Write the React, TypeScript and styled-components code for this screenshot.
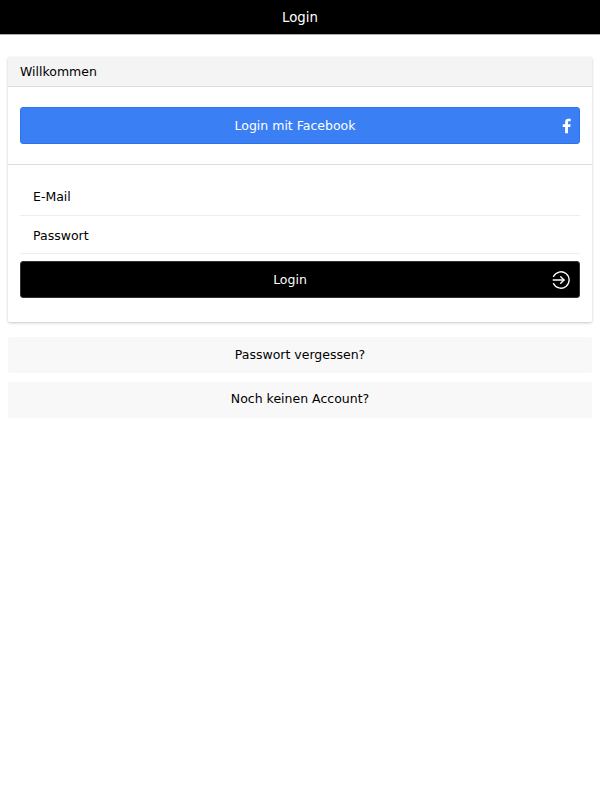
import React from "react";
import styled, { createGlobalStyle } from "styled-components";

const Global = createGlobalStyle`
  html, body { margin: 0; padding: 0; background: #fff; }
  body { font-family: "DejaVu Sans", sans-serif; font-size: 12.5px; color: #000; }
  * { box-sizing: border-box; }
`;

const TopBar = styled.header`
  height: 35px;
  background: #000;
  border-bottom: 1px solid #aaa;
  color: #fff;
  font-size: 13.3px;
  display: flex;
  align-items: center;
  justify-content: center;
`;

const Content = styled.main`
  padding: 22px 8px 0;
  display: flex;
  flex-direction: column;
`;

const Card = styled.section`
  height: 265px;
  background: #fff;
  border-radius: 2px;
  box-shadow: 0 1px 3px rgba(0, 0, 0, 0.22);
  margin-bottom: 15px;
`;

const CardHead = styled.div`
  height: 30px;
  background: #f4f4f4;
  border-bottom: 1px solid #ddd;
  padding: 0 12px;
  display: flex;
  align-items: center;
`;

const FacebookArea = styled.div`
  height: 78px;
  padding: 20px 12px 0;
  border-bottom: 1px solid #ddd;
`;

const ActionButton = styled.button<{ $bg: string; $edge: string; $offset: number }>`
  position: relative;
  width: 100%;
  height: 37px;
  display: flex;
  align-items: center;
  justify-content: center;
  padding: 0 ${(p) => p.$offset}px 0 12px;
  background: ${(p) => p.$bg};
  border: 1px solid ${(p) => p.$edge};
  border-radius: 3px;
  color: #fff;
  font: 12.5px "DejaVu Sans", sans-serif;
`;

const ButtonIcon = styled.svg<{ $right: number }>`
  position: absolute;
  top: 50%;
  right: ${(p) => p.$right}px;
  transform: translateY(-50%);
`;

const Form = styled.form`
  padding: 13px 12px 0;
`;

const Field = styled.div<{ $drop: number }>`
  height: 38px;
  padding: ${(p) => p.$drop}px 13px 0;
  display: flex;
  align-items: center;
  border-bottom: 1px solid #eee;
`;

const LoginWrap = styled.div`
  margin-top: 7px;
`;

const LinkButton = styled.button<{ $lift: number }>`
  display: block;
  width: 100%;
  height: 36px;
  margin-bottom: 9px;
  padding: 0 0 ${(p) => p.$lift}px;
  background: #f8f8f8;
  border: none;
  border-radius: 3px;
  color: #000;
  font: 12.5px "DejaVu Sans", sans-serif;
`;

export default function App() {
  return (
    <>
      <Global />
      <TopBar>Login</TopBar>
      <Content>
        <Card>
          <CardHead>Willkommen</CardHead>
          <FacebookArea>
            <ActionButton type="button" $bg="#3b7ff5" $edge="#2f72ee" $offset={22}>
              Login mit Facebook
              <ButtonIcon $right={8} width="9" height="15" viewBox="0 0 9 16" fill="#fff">
                <path d="M6.1 16V9h2.400l.4-3H6.100V4.300c0-.8.3-1.300 1.400-1.300H9V.2C8.700.1 7.800 0 6.800 0 4.600 0 3 1.400 3 3.900V6H.5v3H3v7z" />
              </ButtonIcon>
            </ActionButton>
          </FacebookArea>
          <Form>
            <Field $drop={0}>E-Mail</Field>
            <Field $drop={1}>Passwort</Field>
            <LoginWrap>
              <ActionButton type="button" $bg="#000" $edge="#333" $offset={32}>
                Login
                <ButtonIcon $right={9} width="19" height="18" viewBox="0 0 19 18" fill="none" stroke="#fff" strokeWidth="1.3" strokeLinecap="round" strokeLinejoin="round">
                  <path d="M2.500 5.500a8.200 8.200 0 1 1 0 7" />
                  <path d="M2.200 9H13" />
                  <path d="M9.700 5.700 13 9l-3.300 3.300" />
                </ButtonIcon>
              </ActionButton>
            </LoginWrap>
          </Form>
        </Card>
        <LinkButton type="button" $lift={2}>Passwort vergessen?</LinkButton>
        <LinkButton type="button" $lift={4}>Noch keinen Account?</LinkButton>
      </Content>
    </>
  );
}
